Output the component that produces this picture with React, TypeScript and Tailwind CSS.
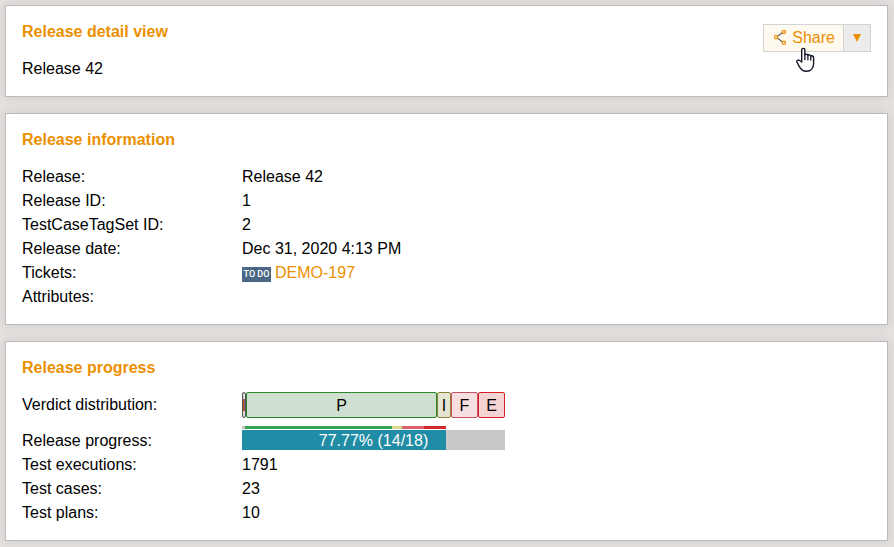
import React from "react";

const verdicts = [
  { key: "none", label: "I", share: 4, style: "border-[#555555] bg-[#dcdcdc] text-[#8a2f0c]" },
  { key: "passed", label: "P", share: 191, style: "border-[#2a862f] bg-[#cfdfd0]" },
  { key: "inconclusive", label: "I", share: 14, style: "border-[#8a8434] bg-[#e5e4d3]" },
  { key: "failed", label: "F", share: 27, style: "border-[#c9525e] bg-[#f7dfe1]" },
  { key: "error", label: "E", share: 27, style: "border-[#d3222a] bg-[#f5d3d3]" },
];

const verdictTotal = verdicts.reduce((sum, verdict) => sum + verdict.share, 0);

const strip = [
  { key: "none", share: 3, color: "bg-[#c4c4c4]" },
  { key: "passed", share: 147, color: "bg-[#33a655]" },
  { key: "inconclusive", share: 10, color: "bg-[#dbd98c]" },
  { key: "failed", share: 22, color: "bg-[#d9626b]" },
  { key: "error", share: 22, color: "bg-[#d3272d]" },
];

const Panel: React.FC<{ children: React.ReactNode }> = ({ children }) => (
  <section className="border border-[#bbbbbb] bg-white px-4 pt-[17px] pb-[15px] shadow-[0_0_12px_rgba(0,0,0,0.1)]">
    {children}
  </section>
);

const Title: React.FC<{ children: React.ReactNode }> = ({ children }) => (
  <h2 className="mb-4 text-base/[18px] font-bold text-[#eb8f00]">{children}</h2>
);

const Row: React.FC<{ label: string; children?: React.ReactNode }> = ({
  label,
  children,
}) => (
  <div className="flex">
    <dt className="w-[220px] shrink-0">{label}</dt>
    <dd>{children}</dd>
  </div>
);

const ShareIcon = () => (
  <svg width="14" height="16" viewBox="0 0 14 16" fill="none" aria-hidden="true">
    <path d="M3.5 6.2 8.4 2.5M3.5 8.2 8.4 11.7" stroke="#6b6b6b" strokeWidth="1.3" />
    <g stroke="#eb8f00" strokeWidth="1.3">
      <circle cx="2" cy="7.2" r="1.6" />
      <circle cx="9.9" cy="1.9" r="1.6" />
      <circle cx="9.9" cy="12.8" r="1.6" />
    </g>
  </svg>
);

const HandPointer = () => (
  <svg
    className="pointer-events-none absolute top-[22px] left-8"
    width="20"
    height="26"
    viewBox="0 0 20 26"
    aria-hidden="true"
  >
    <path
      d="M5.7 15V3c0-2.2 3.2-2.2 3.2 0v4.9c.5-1.1 2.8-1 3 .5.7-1 2.7-.7 2.9.8.9-.8 2.8-.2 2.8 1.4v5.6c0 4.6-2.7 8-7.2 8-3.9 0-5.6-2-7.2-4.9L.9 15c-.6-1.6 1.4-2.5 2.6-1.5z"
      fill="#ffffff"
      stroke="#15152a"
      strokeWidth="1.4"
      strokeLinejoin="round"
    />
    <path d="M8.9 7.8v4.8M11.9 8.4v4.4M14.8 9.2v3.9" stroke="#15152a" strokeWidth="1.3" strokeLinecap="round" />
  </svg>
);

const ShareButton = () => (
  <div className="relative mt-px flex h-7 border border-[#d3d3d3] text-[#eb8f00]">
    <button type="button" className="flex items-center gap-1 bg-[#fffaf0] pr-2 pl-2.5">
      <ShareIcon />
      Share
    </button>
    <button
      type="button"
      aria-label="More share options"
      className="flex w-[27px] items-center justify-center border-l border-[#d3d3d3] bg-[#ececec]"
    >
      <svg width="8" height="8" viewBox="0 0 8 8" aria-hidden="true">
        <path d="M0 0h8L4 8z" fill="#eb8f00" />
      </svg>
    </button>
    <HandPointer />
  </div>
);

const App: React.FC = () => {
  return (
    <main className="flex min-h-screen flex-col gap-4 bg-[#e4e1df] pt-[5px] pr-1.5 pb-1.5 pl-[5px] font-['Liberation_Sans',Arial,sans-serif] text-base text-black">
      <Panel>
        <div className="flex items-start justify-between">
          <div>
            <Title>Release detail view</Title>
            <p>Release 42</p>
          </div>
          <ShareButton />
        </div>
      </Panel>

      <Panel>
        <Title>Release information</Title>
        <dl>
          <Row label="Release:">Release 42</Row>
          <Row label="Release ID:">1</Row>
          <Row label="TestCaseTagSet ID:">2</Row>
          <Row label="Release date:">Dec 31, 2020 4:13 PM</Row>
          <Row label="Tickets:">
            <span className="flex items-end gap-1">
              <span className="mb-[3px] h-[15px] w-[29px] bg-[#4a6785] text-center font-[Roboto,sans-serif] text-[9px]/[15px] font-medium whitespace-nowrap text-white">
                TO DO
              </span>
              <a href="#DEMO-197" className="text-[#eb8f00]">
                DEMO-197
              </a>
            </span>
          </Row>
          <Row label="Attributes:" />
        </dl>
      </Panel>

      <Panel>
        <Title>Release progress</Title>
        <dl className="-mt-px">
          <div className="mb-2 flex leading-[26px]">
            <dt className="w-[220px] shrink-0">Verdict distribution:</dt>
            <dd className="flex h-[26px] w-[263px]">
              {verdicts.map((verdict) => (
                <span
                  key={verdict.key}
                  style={{ width: `${(verdict.share / verdictTotal) * 100}%` }}
                  className={`flex shrink-0 items-center justify-center overflow-hidden rounded-xs border pt-0.5 ${verdict.style}`}
                >
                  {verdict.label}
                </span>
              ))}
            </dd>
          </div>
          <div className="flex items-end">
            <dt className="w-[220px] shrink-0">Release progress:</dt>
            <dd className="w-[263px] pb-[3px]">
              <div className="mb-px flex h-[3px] w-[204px]">
                {strip.map((part) => (
                  <span
                    key={part.key}
                    style={{ flexGrow: part.share }}
                    className={`basis-0 ${part.color}`}
                  />
                ))}
              </div>
              <div className="grid grid-rows-[20px] bg-[#c9c9c9]">
                <div className="col-start-1 row-start-1 w-[204px] bg-[#208ca5]" />
                <span className="col-start-1 row-start-1 text-center leading-[22px] text-white">
                  77.77% (14/18)
                </span>
              </div>
            </dd>
          </div>
          <Row label="Test executions:">1791</Row>
          <Row label="Test cases:">23</Row>
          <Row label="Test plans:">10</Row>
        </dl>
      </Panel>
    </main>
  );
};

export default App;
